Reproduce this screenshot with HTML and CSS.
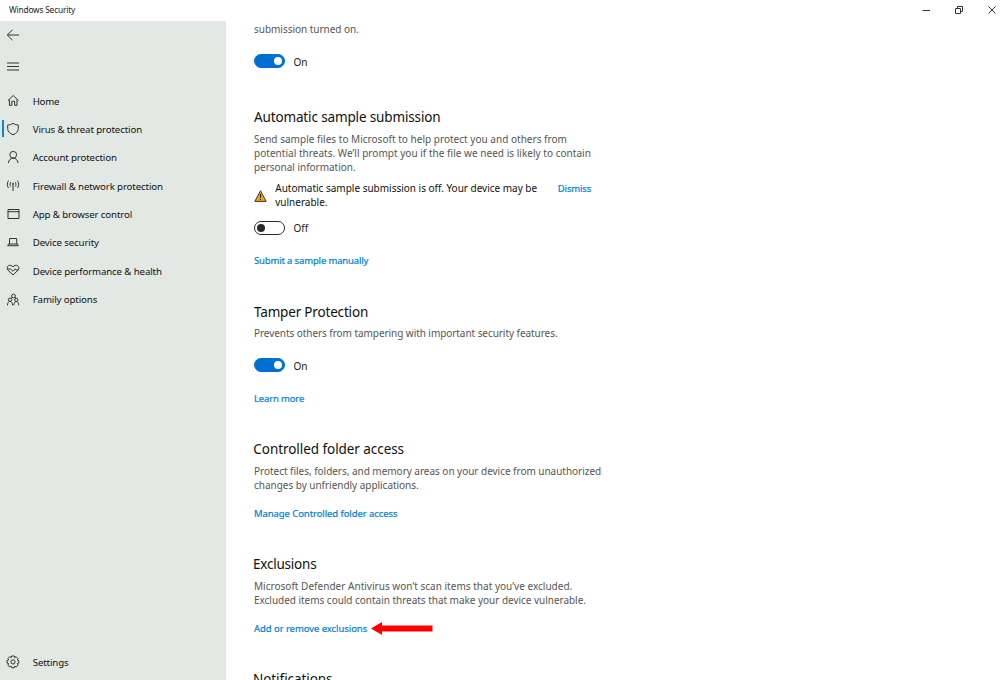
FILE: index.html
```html
<!DOCTYPE html>
<html lang="en">
<head>
<meta charset="utf-8">
<title>Windows Security</title>
<link rel="stylesheet" href="styles.css">
</head>
<body>
<div class="window">
  <header class="titlebar">
    <span class="app-name">Windows Security</span>
    <div class="controls">
      <svg width="10" height="10" viewBox="0 0 10 10"><path d="M1.500 5.500h7.500"/></svg>
      <svg width="10" height="10" viewBox="0 0 10 10"><path d="M1.500 3.500h5v5h-5zM3.500 3V1.500h5v5H7"/></svg>
      <svg width="10" height="10" viewBox="0 0 10 10"><path d="M1.500 1.500l7 7M8.500 1.500l-7 7"/></svg>
    </div>
  </header>
  <div class="body">
    <nav class="sidebar">
      <svg class="icon back" viewBox="0 0 14 14"><path d="M13 7H1.500M6.500 1.800L1.300 7l5.200 5.200"/></svg>
      <svg class="icon menu" viewBox="0 0 14 14"><path d="M1 4h12M1 7.500h12M1 11h12"/></svg>
      <ul class="nav">
        <li><svg class="icon up" viewBox="0 0 14 14"><path d="M2 7.500L7.200 2.500l5.200 5M3.400 6.500v5.800h2.400V8.300h2.800v4H11V6.500"/></svg><span class="w-home">Home</span></li>
        <li class="active"><svg class="icon up" viewBox="0 0 14 14"><path d="M7 1.300c1.600 1.100 3.200 1.600 5.300 1.700v3.500c0 3-2 5-5.300 6.300C3.700 11.500 1.700 9.500 1.700 6.500V3C3.800 2.900 5.400 2.400 7 1.300z"/></svg><span class="w-virus">Virus &amp; threat protection</span></li>
        <li><svg class="icon up" viewBox="0 0 14 14"><circle cx="7.200" cy="4.800" r="3.400"/><path d="M2.400 13c.3-2.800 2-4.800 4.800-4.800s4.500 2 4.800 4.800"/></svg><span>Account protection</span></li>
        <li><svg class="icon up" viewBox="0 0 14 14"><path d="M7 6v7M4.700 4.200c-.9 1.300-.9 3 0 4.300M9.300 4.200c.9 1.300.9 3 0 4.300M2.500 2.700C.9 4.900.9 7.800 2.500 10M11.500 2.700c1.600 2.200 1.600 5.100 0 7.300"/><circle cx="7" cy="5.700" r=".6"/></svg><span>Firewall &amp; network protection</span></li>
        <li><svg class="icon up" viewBox="0 0 14 14"><path d="M2 2.500h11v9h-11zM2 4.700h11"/></svg><span>App &amp; browser control</span></li>
        <li><svg class="icon up" viewBox="0 0 14 14"><path d="M3.500 9V3.500h7.200V9M2.500 9h9l.8 1.700H1.700z"/></svg><span>Device security</span></li>
        <li><svg class="icon up" viewBox="0 0 14 14"><path d="M7 12L2 7.200C.7 5.800 1 3.600 2.400 2.700 4 1.800 6 2.300 7 4c1-1.700 3-2.200 4.600-1.300C13 3.600 13.300 5.800 12 7.200zM1.700 6h3L7 8.300l2.200-2.500 1 1.200h2"/></svg><span>Device performance &amp; health</span></li>
        <li><svg class="icon" viewBox="0 0 14 14"><circle cx="7.500" cy="3" r="1.900"/><circle cx="4" cy="6.700" r="1.700"/><circle cx="10.300" cy="6.900" r="1.600"/><path d="M5.300 5.200l.7-.6M9 4.600l1 .6M1.400 12.300c.2-2.300 1-3.900 2.600-3.900s2.500 1.600 2.600 3.900M7.800 12.300c.2-2.200 1-3.800 2.500-3.800s2.300 1.600 2.500 3.800"/></svg><span>Family options</span></li>
      </ul>
      <div class="settings">
        <svg class="icon up" viewBox="0 0 14 14"><path d="M5.700 1h2.600l.4 1.500 1.500-.8 1.900 1.900-.8 1.400 1.500.6v2.500l-1.500.5.8 1.500-1.900 1.900-1.500-.8-.4 1.600H5.700l-.5-1.600-1.500.8-1.800-1.900.8-1.500L1 8.100V5.600L2.700 5l-.8-1.400 1.800-1.900 1.500.8z"/><circle cx="7" cy="6.900" r="2.100"/></svg><span>Settings</span>
      </div>
    </nav>
    <main class="content">
      <p class="desc first">submission turned on.</p>
      <div class="toggle-row"><span class="toggle on"></span><span>On</span></div>

      <section class="auto">
        <h2>Automatic sample submission</h2>
        <p class="desc"><span class="loose">Send sample files to Microsoft to help protect you and others from</span><br><span class="looser">potential threats. We’ll prompt you if the file we need is likely to contain</span><br>personal information.</p>
        <div class="alert">
          <svg class="warn" width="13" height="12" viewBox="0 0 13 12"><path class="tri" d="M6.500.8l5.700 10.600H.8z"/><path class="mark" d="M6.500 4v3.800M6.500 8.800v1.200"/></svg>
          <p>Automatic sample submission is off. Your device may be<br>vulnerable.</p>
          <a class="dismiss">Dismiss</a>
        </div>
        <div class="toggle-row"><span class="toggle"></span><span>Off</span></div>
        <a class="link">Submit a sample manually</a>
      </section>

      <section class="tamper">
        <h2>Tamper Protection</h2>
        <p class="desc">Prevents others from tampering with important security features.</p>
        <div class="toggle-row"><span class="toggle on"></span><span>On</span></div>
        <a class="link">Learn more</a>
      </section>

      <section class="folder">
        <h2>Controlled folder access</h2>
        <p class="desc">Protect files, folders, and memory areas on your device from unauthorized<br>changes by unfriendly applications.</p>
        <a class="link">Manage Controlled folder access</a>
      </section>

      <section class="exclusions">
        <h2>Exclusions</h2>
        <p class="desc"><span class="loose">Microsoft Defender Antivirus won’t scan items that you’ve excluded.</span><br>Excluded items could contain threats that make your device vulnerable.</p>
        <div class="link-row"><a class="link">Add or remove exclusions</a><svg width="62" height="13" viewBox="0 0 62 13"><path d="M0 6.500L11 0v3.500h50.500v6H11V13z" fill="#fe0000"/></svg></div>
      </section>

      <section class="notifications">
        <h2>Notifications</h2>
      </section>
    </main>
  </div>
</div>
</body>
</html>
```
FILE: styles.css
```css
* { box-sizing: border-box; }
body, h2, p, ul { margin: 0; padding: 0; }
body {
  font: 10px/14.2px "Noto Sans", "Open Sans", sans-serif;
  letter-spacing: -.03px;
  color: #1c1c1c;
  background: #fff;
  overflow: hidden;
}
.window { height: 680px; display: flex; flex-direction: column; overflow: hidden; }
.titlebar {
  height: 21px; flex: none;
  display: flex; justify-content: space-between; align-items: center;
  padding: 0 3px 1px 9px;
  font-size: 8.3px; letter-spacing: -.17px;
}
.controls { display: flex; gap: 23px; }
.controls svg { fill: none; stroke: #333; stroke-width: 1; }
.body { flex: 1; display: flex; min-height: 0; }
.sidebar {
  width: 226px; flex: none;
  background: #e2e8e4;
  display: flex; flex-direction: column;
  padding: 7px 0 3px;
}
.icon { width: 14px; height: 14px; flex: none; fill: none; stroke: #333; stroke-width: 1; }
.back, .menu { margin-left: 6px; }
.menu { margin-top: 17px; }
.nav { list-style: none; margin-top: 14px; }
.nav li, .settings {
  display: flex; align-items: center; gap: 12.500px;
  height: 28.350px; padding-left: 6.200px;
  font-size: 9.700px; letter-spacing: -.13px; color: #111;
  position: relative;
}
.nav span, .settings span { padding-top: 1.200px; }
.nav .w-home { letter-spacing: -.25px; }
.nav .w-virus { letter-spacing: -.12px; }
.up { margin-bottom: 1.500px; }
.active::before { content: ""; position: absolute; left: 2px; top: 5px; width: 2px; height: 17px; background: #0a84dc; }
.settings { margin-top: auto; }
.content { flex: 1; padding: 1px 0 0 28px; overflow: hidden; }
.desc { color: #555; white-space: nowrap; }
.loose { letter-spacing: .02px; }
.looser { letter-spacing: .03px; }
.first { margin-bottom: 17.800px; }
.toggle-row { display: flex; align-items: center; gap: 8.500px; height: 14.300px; }
.toggle-row span:last-child { padding-top: 1.500px; }
.toggle {
  width: 31px; height: 14.300px; border-radius: 8px;
  border: 1.500px solid #2a2a2a;
  display: flex; align-items: center; padding: 0 2px;
}
.toggle::after { content: ""; width: 8px; height: 8px; border-radius: 50%; background: #2a2a2a; }
.toggle.on { background: #006fd4; border-color: #006fd4; justify-content: flex-end; padding-right: 2px; }
.toggle.on::after { background: #fff; }
h2 { font-size: 13.500px; line-height: 20px; letter-spacing: -.14px; font-weight: 400; color: #111; white-space: nowrap; margin-bottom: 5px; }
.link, .dismiss { font-size: 9.500px; line-height: 15.400px; letter-spacing: -.15px; color: #0080d8; -webkit-text-stroke: .2px #0080d8; white-space: nowrap; }
.link { display: block; margin-bottom: -1.200px; }
.auto { margin-top: 38.500px; }
.alert { display: flex; margin: 6.800px 0 11px; color: #111; }
.alert p { width: 282.500px; margin-left: 8.300px; letter-spacing: -.01px; white-space: nowrap; }
.warn { margin-top: 9px; }
.tri { fill: #f2a80d; stroke: #3c3426; stroke-width: 1; }
.mark { fill: none; stroke: #222; stroke-width: 1.200; }
.auto .link { margin-top: 18.400px; }
.tamper { margin-top: 34px; }
.tamper h2 { letter-spacing: -.18px; margin-bottom: 4.200px; }
.tamper .desc { letter-spacing: -.06px; }
.tamper .toggle-row { margin-top: 17.800px; }
.tamper .link { margin-top: 18.700px; }
.folder { margin-top: 34px; }
.folder h2 { margin-left: -.700px; letter-spacing: -.06px; }
.folder .link { letter-spacing: -.08px; }
.folder .link, .link-row { margin-top: 13.700px; }
.exclusions { margin-top: 34px; }
.exclusions h2 { margin-left: -1px; letter-spacing: -.22px; }
.exclusions .link { letter-spacing: -.06px; }
.link-row { display: flex; align-items: center; gap: 4px; }
.notifications { margin-top: 33.500px; }
.notifications h2 { margin-left: -1px; letter-spacing: -.06px; }
```
